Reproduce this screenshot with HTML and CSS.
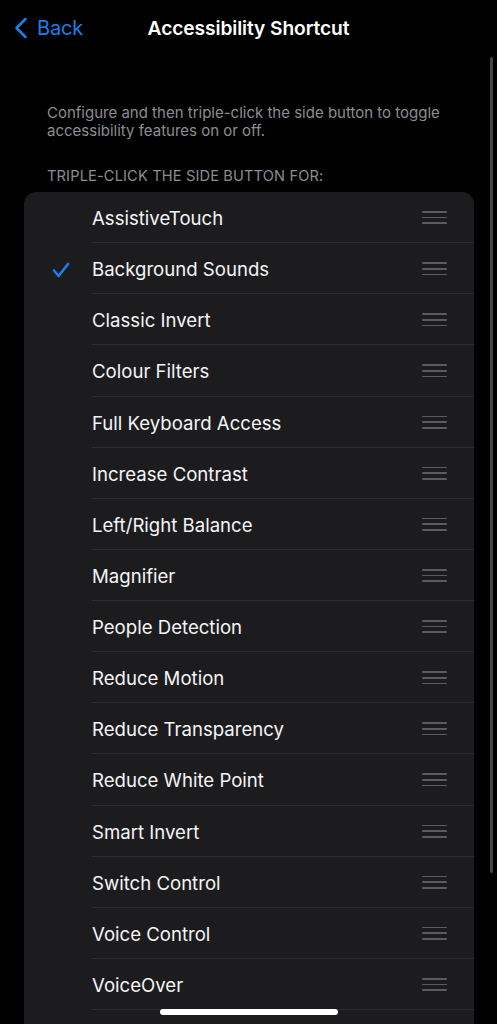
FILE: index.html
```html
<!DOCTYPE html>
<html>
<head>
<meta charset="utf-8">
<link rel="stylesheet" href="styles.css">
</head>
<body>
<div class="screen">
  <header class="nav">
    <div class="back">
      <svg class="chev" width="14" height="22" viewBox="0 0 14 22"><path d="M11.5 2 L2.5 11 L11.5 20" fill="none" stroke="#1a7fe8" stroke-width="2.6" stroke-linecap="round" stroke-linejoin="round"/></svg>
      <span>Back</span>
    </div>
    <h1 class="title">Accessibility Shortcut</h1>
  </header>
  <p class="desc">Configure and then triple-click the side button to toggle accessibility features on or off.</p>
  <p class="section">TRIPLE-CLICK THE SIDE BUTTON FOR:</p>
  <ul class="card">
    <li class="row"><span class="check"></span><div class="cell"><span class="label">AssistiveTouch</span><span class="grip"><i></i><i></i><i></i></span></div></li>
    <li class="row"><span class="check"><svg width="18" height="16" viewBox="0 0 18 16"><path d="M2 8.5 L6.6 14 L16 2" fill="none" stroke="#1a7fe8" stroke-width="2.6" stroke-linecap="round" stroke-linejoin="round"/></svg></span><div class="cell"><span class="label">Background Sounds</span><span class="grip"><i></i><i></i><i></i></span></div></li>
    <li class="row"><span class="check"></span><div class="cell"><span class="label">Classic Invert</span><span class="grip"><i></i><i></i><i></i></span></div></li>
    <li class="row"><span class="check"></span><div class="cell"><span class="label">Colour Filters</span><span class="grip"><i></i><i></i><i></i></span></div></li>
    <li class="row"><span class="check"></span><div class="cell"><span class="label">Full Keyboard Access</span><span class="grip"><i></i><i></i><i></i></span></div></li>
    <li class="row"><span class="check"></span><div class="cell"><span class="label">Increase Contrast</span><span class="grip"><i></i><i></i><i></i></span></div></li>
    <li class="row"><span class="check"></span><div class="cell"><span class="label">Left/Right Balance</span><span class="grip"><i></i><i></i><i></i></span></div></li>
    <li class="row"><span class="check"></span><div class="cell"><span class="label">Magnifier</span><span class="grip"><i></i><i></i><i></i></span></div></li>
    <li class="row"><span class="check"></span><div class="cell"><span class="label">People Detection</span><span class="grip"><i></i><i></i><i></i></span></div></li>
    <li class="row"><span class="check"></span><div class="cell"><span class="label">Reduce Motion</span><span class="grip"><i></i><i></i><i></i></span></div></li>
    <li class="row"><span class="check"></span><div class="cell"><span class="label">Reduce Transparency</span><span class="grip"><i></i><i></i><i></i></span></div></li>
    <li class="row"><span class="check"></span><div class="cell"><span class="label">Reduce White Point</span><span class="grip"><i></i><i></i><i></i></span></div></li>
    <li class="row"><span class="check"></span><div class="cell"><span class="label">Smart Invert</span><span class="grip"><i></i><i></i><i></i></span></div></li>
    <li class="row"><span class="check"></span><div class="cell"><span class="label">Switch Control</span><span class="grip"><i></i><i></i><i></i></span></div></li>
    <li class="row"><span class="check"></span><div class="cell"><span class="label">Voice Control</span><span class="grip"><i></i><i></i><i></i></span></div></li>
    <li class="row"><span class="check"></span><div class="cell"><span class="label">VoiceOver</span><span class="grip"><i></i><i></i><i></i></span></div></li>
  </ul>
  <div class="scrollbar"></div>
  <div class="home"></div>
</div>
</body>
</html>
```
FILE: styles.css
```css
html, body {
  margin: 0;
  padding: 0;
  background: #000;
}
body {
  font-family: "Inter", "Roboto", sans-serif;
  color: #fff;
  -webkit-font-smoothing: antialiased;
}
.screen {
  position: relative;
  width: 497px;
  height: 1024px;
  overflow: hidden;
  background: #000;
}
.nav {
  position: relative;
  height: 57px;
  display: flex;
  align-items: center;
}
.back {
  display: flex;
  align-items: center;
  gap: 9px;
  padding-left: 14px;
  color: #1a7fe8;
  font-size: 20px;
  letter-spacing: -0.2px;
  margin-top: -1px;
}
.chev {
  display: block;
}
.title {
  position: absolute;
  left: 0;
  right: 0;
  top: 16px;
  margin: 0;
  text-align: center;
  font-size: 19.2px;
  font-weight: 600;
  letter-spacing: -0.1px;
  pointer-events: none;
}
.desc {
  margin: 47px 0 0 47px;
  width: 420px;
  font-size: 15px;
  line-height: 18px;
  color: #8d8d92;
}
.section {
  margin: 27px 0 0 47px;
  font-size: 14.6px;
  line-height: 18px;
  color: #8d8d92;
  letter-spacing: 0.15px;
}
.card {
  list-style: none;
  margin: 7px 0 0 24px;
  padding: 0 0 40px;
  width: 450px;
  background: #1c1c1e;
  border-radius: 12px 12px 0 0;
  overflow: hidden;
}
.row {
  display: flex;
  height: 51.13px;
}
.check {
  width: 68px;
  display: flex;
  align-items: center;
  justify-content: flex-start;
  padding-left: 28px;
  box-sizing: border-box;
}
.check svg {
  display: block;
  margin-top: 2px;
}
.cell {
  flex: 1;
  display: flex;
  align-items: center;
  justify-content: space-between;
  border-bottom: 1px solid #2e2e31;
  padding-right: 27px;
}
.label {
  font-size: 18.6px;
  color: #f5f5f7;
  margin-top: 2px;
}
.grip {
  display: flex;
  flex-direction: column;
  gap: 4px;
  width: 25px;
  margin-top: 1px;
}
.grip i {
  display: block;
  height: 1.7px;
  background: #5c5c60;
  border-radius: 1px;
}
.scrollbar {
  position: absolute;
  left: 490px;
  top: 57px;
  width: 3px;
  height: 816px;
  border-radius: 2px;
  background: #444446;
}
.home {
  position: absolute;
  left: 160px;
  top: 1009px;
  width: 178px;
  height: 6px;
  border-radius: 3px;
  background: #fff;
}
```
